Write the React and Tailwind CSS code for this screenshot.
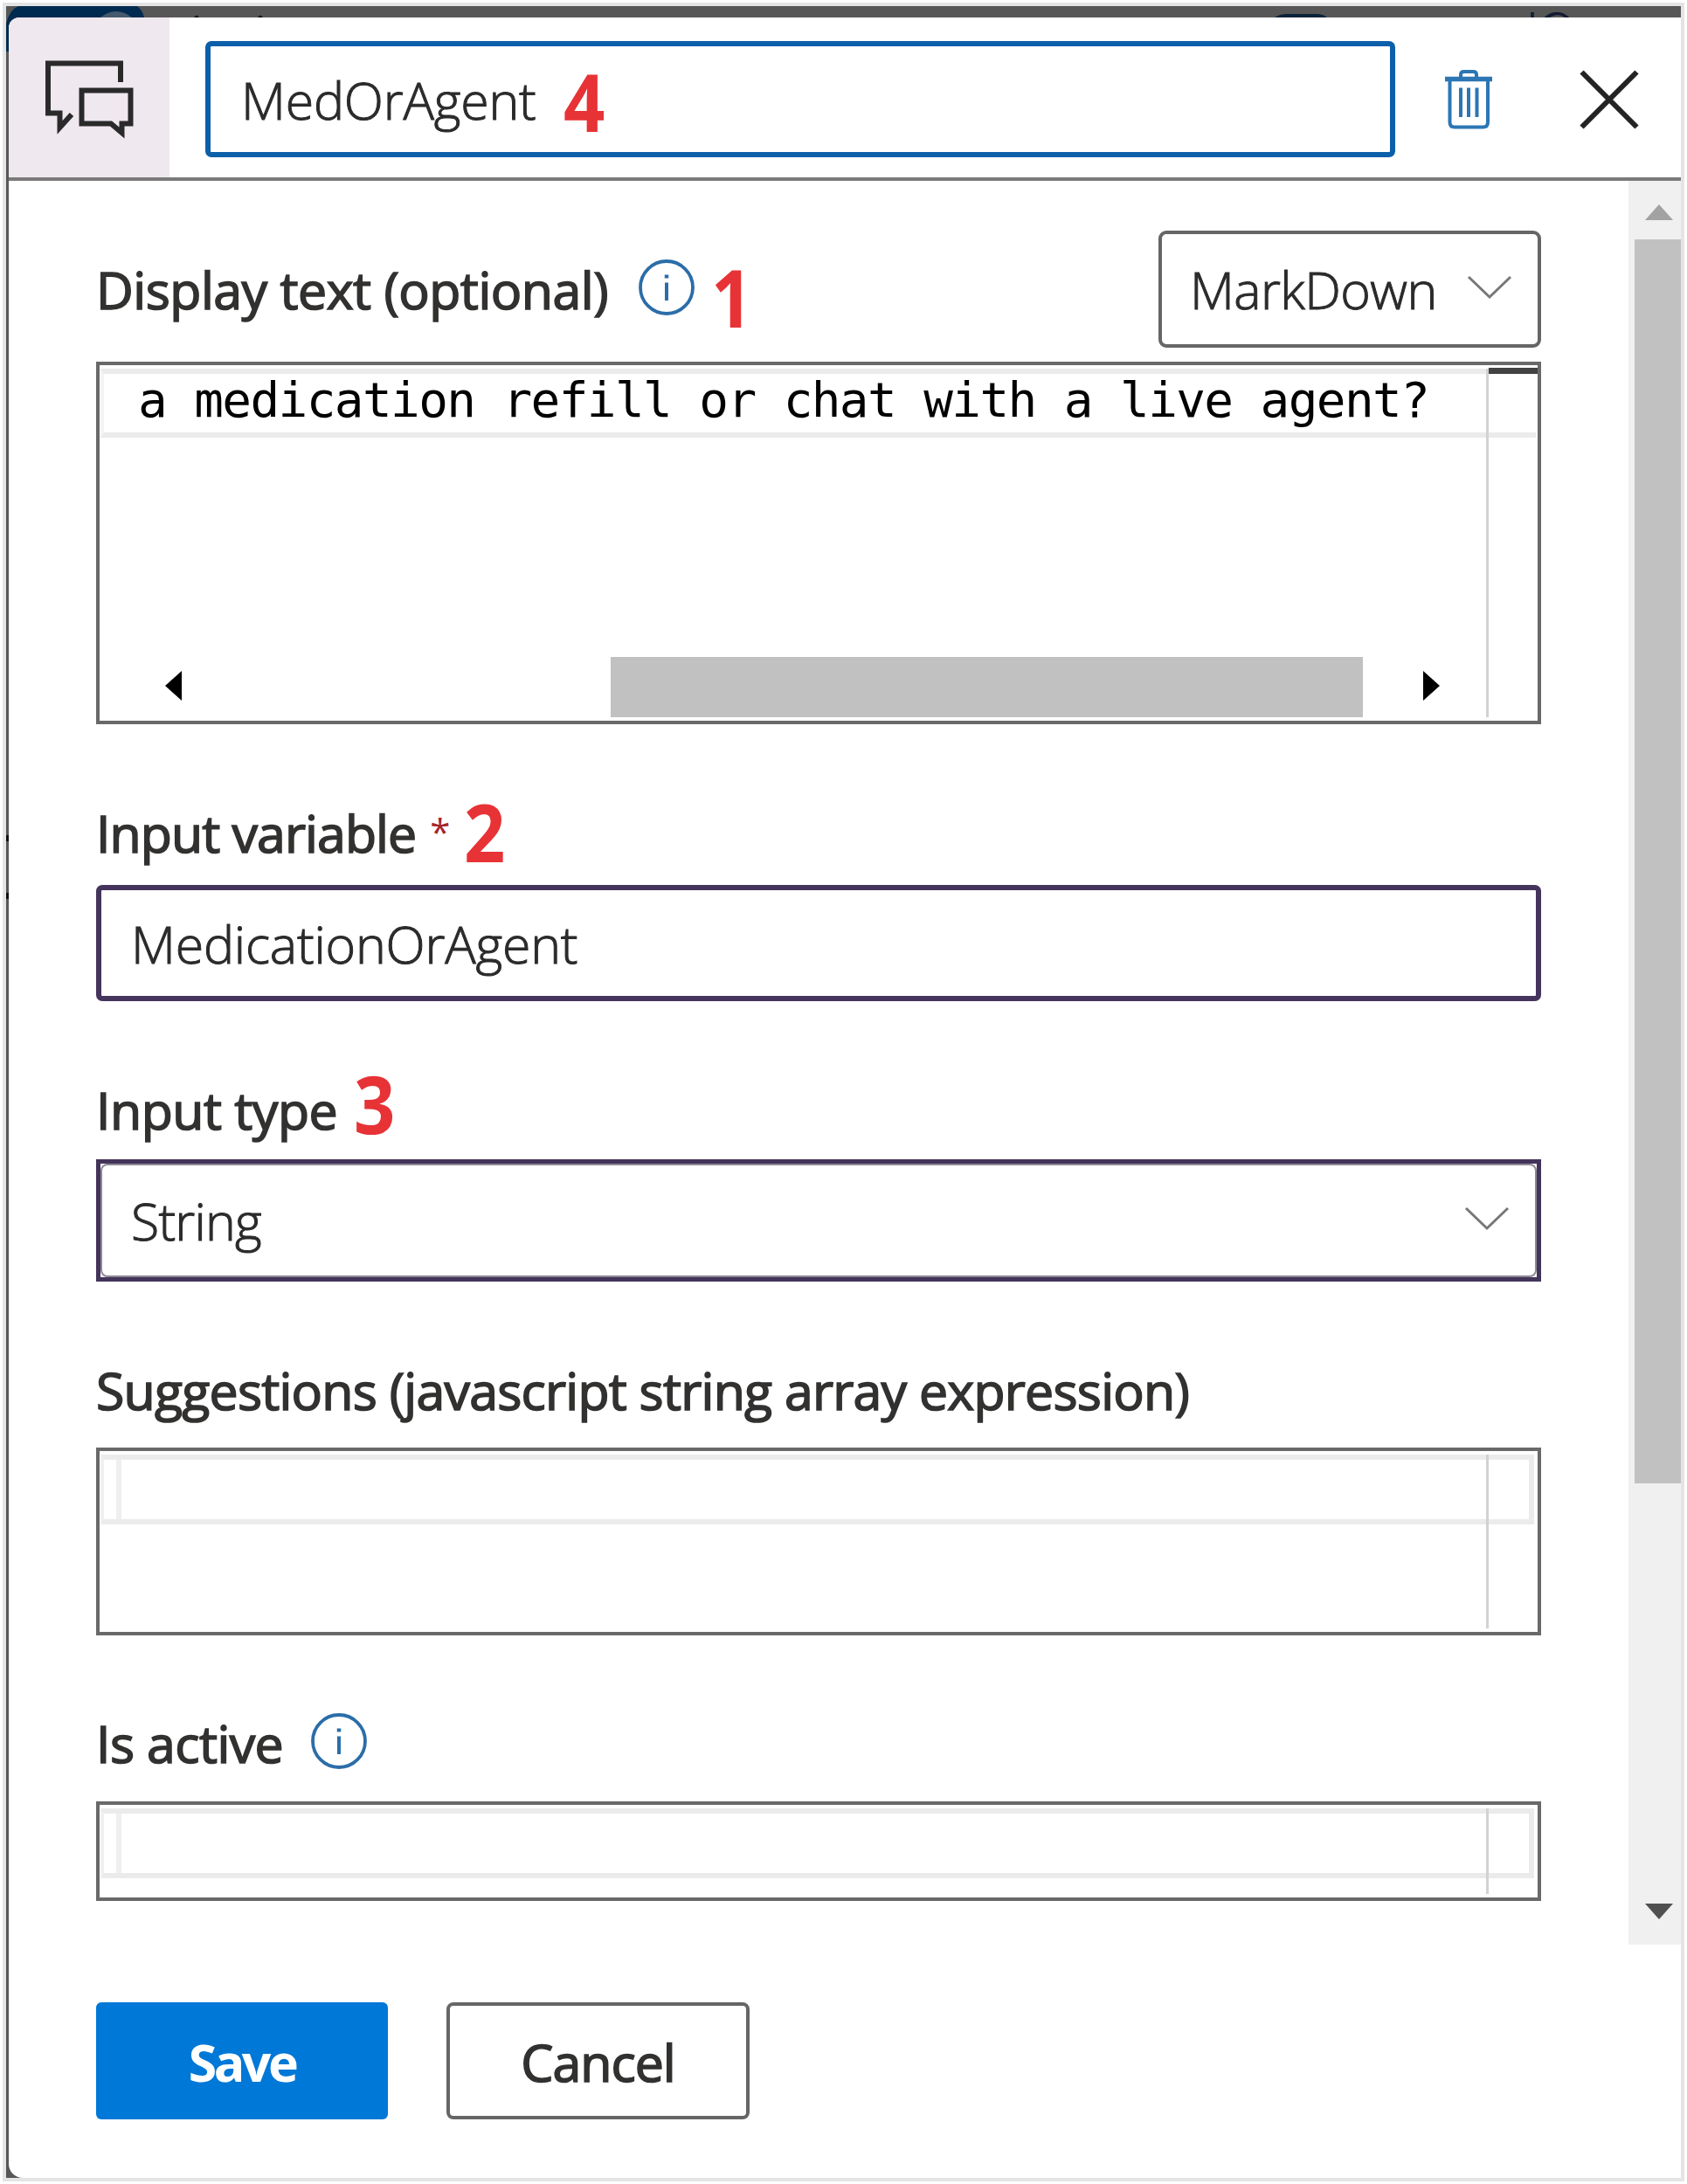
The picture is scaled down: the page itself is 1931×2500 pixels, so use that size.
const fieldText =
  "font-['Open_Sans','Segoe_UI',sans-serif] text-[59px] leading-[64px] font-light text-[#2b2b2b] [-webkit-text-stroke:1px_#2b2b2b] whitespace-nowrap";
const labelText =
  "font-['Open_Sans','Segoe_UI',sans-serif] text-[59px] leading-[64px] font-normal text-[#323130] [-webkit-text-stroke:1.6px_#323130] whitespace-nowrap";

function Step({ n, className }) {
  return (
    <span
      className={`absolute origin-left scale-x-90 font-['Open_Sans','Segoe_UI',sans-serif] text-[92px] leading-none font-bold text-[#e73336] ${className}`}
    >
      {n}
    </span>
  );
}

function ChatIcon() {
  return (
    <svg viewBox="0 0 106 92" className="h-[92px] w-[106px]" fill="none" stroke="#2b2a2b" strokeWidth="6">
      <path d="M88 25V3.5H5V60.500H18.500V77L32 62" />
      <path d="M43.500 34.500H99.500V72.500H89.500V83L77 72.500H43.500Z" />
    </svg>
  );
}

function TrashIcon() {
  return (
    <svg viewBox="0 0 56 68" className="h-[68px] w-[56px]" fill="none" stroke="#2c76b4">
      <path d="M1 10.500H55" strokeWidth="5.500" />
      <path d="M19 9V5.500Q19 2 22.500 2H33.500Q37 2 37 5.500V9" strokeWidth="4" />
      <path d="M6.500 12V60Q6.500 65.500 12 65.500H44.500Q50 65.500 50 60V12" strokeWidth="4" />
      <path d="M19 20.500V54M28 20.500V54M37.500 20.500V54" strokeWidth="4" />
    </svg>
  );
}

function CloseIcon() {
  return (
    <svg viewBox="0 0 68 68" className="size-[68px]" fill="none" stroke="#232323" strokeWidth="6">
      <path d="M2.500 2.500L65.500 65.500M65.500 2.500L2.500 65.500" />
    </svg>
  );
}

function InfoIcon() {
  return (
    <svg viewBox="0 0 66 66" className="size-[66px]" fill="none" stroke="#2b6da8">
      <circle cx="33" cy="33" r="30" strokeWidth="3.800" />
      <path d="M33 27.500V48" strokeWidth="4" />
      <path d="M33 18.500V22.500" strokeWidth="4.500" />
    </svg>
  );
}

function Chevron() {
  return (
    <svg viewBox="0 0 52 28" className="h-[28px] w-[52px]" fill="none" stroke="#777777" strokeWidth="3">
      <path d="M2 2L26 25L50 2" />
    </svg>
  );
}

function EmptyEditor({ className }) {
  return (
    <div className={`relative w-[1654px] border-4 border-[#696969] bg-white pt-1 pl-px ${className}`}>
      <div className="h-[80px] w-[1641px] border-6 border-l-4 border-[#ebebeb] border-l-[#f0f0f0] pl-[14px]">
        <div className="h-full w-[6px] bg-[#efefef]" />
      </div>
      <div className="absolute top-1 bottom-1 left-[1587px] w-[3px] bg-[#d2d2d2]" />
    </div>
  );
}

function Header() {
  return (
    <header className="flex h-[187px] shrink-0 items-center border-b-4 border-[#7a7a7a]">
      <div className="flex h-full w-[184px] items-center rounded-tl-[12px] bg-[#efe8ee] pt-[7px] pl-10">
        <ChatIcon />
      </div>
      <div className="relative mt-1 ml-[41px] flex h-[133px] w-[1362px] items-center rounded-[7px] border-6 border-[#0c5fa9] pl-[35px]">
        <span className={`${fieldText} tracking-[-0.2px]`}>MedOrAgent</span>
        <Step n="4" className="top-[17px] left-[404px]" />
      </div>
      <button className="mt-1 ml-[56px]">
        <TrashIcon />
      </button>
      <button className="mt-1 ml-[99px]">
        <CloseIcon />
      </button>
    </header>
  );
}

function DisplayEditor() {
  return (
    <div className="relative mt-4 flex h-[415px] w-[1654px] flex-col border-4 border-[#696969] pt-1 pl-px">
      <div className="flex h-[79px] w-[1643px] items-center border-y-6 border-l-4 border-[#ebebeb] border-l-[#f4f4f4] pl-[39px]">
        <span className="-mt-2 font-['DejaVu_Sans_Mono','Consolas',monospace] text-[56px] leading-[60px] tracking-[-1.6px] whitespace-pre text-black">
          a medication refill or chat with a live agent?
        </span>
      </div>
      <div className="absolute top-1 bottom-1 left-[1587px] w-[3px] bg-[#d2d2d2]" />
      <div className="absolute top-[3px] right-0 h-[7px] w-[56px] bg-[#424242]" />
      <div className="mt-auto mb-1 flex h-[69px] items-center pl-[74px]">
        <svg viewBox="0 0 20 36" className="-mt-1 h-[36px] w-[20px]">
          <path d="M19 1V35L0 18Z" fill="#000" />
        </svg>
        <div className="ml-[490px] h-full w-[861px] bg-[#c1c1c1]" />
        <svg viewBox="0 0 20 36" className="-mt-1 ml-[68px] h-[36px] w-[20px]">
          <path d="M1 1V35L20 18Z" fill="#000" />
        </svg>
      </div>
    </div>
  );
}

function Scrollbar() {
  return (
    <div className="flex h-full w-[60px] flex-col items-end bg-[#f0f0f0]">
      <svg viewBox="0 0 32 18" className="mt-[27px] mr-[9px] h-[18px] w-[32px] shrink-0">
        <path d="M16 0L32 18H0Z" fill="#a2a2a2" />
      </svg>
      <div className="mt-[22px] h-[1424px] w-[53px] bg-[#c1c1c1]" />
      <svg viewBox="0 0 32 18" className="mt-auto mr-[9px] mb-[29px] h-[18px] w-[32px] shrink-0">
        <path d="M0 0H32L16 18Z" fill="#505050" />
      </svg>
    </div>
  );
}

function Form() {
  return (
    <div className="flex w-[1754px] flex-col pt-[57px] pl-[100px]">
      <div className="relative flex h-[134px] w-[1654px] items-center">
        <span className={`${labelText} tracking-[-0.5px]`}>Display text (optional)</span>
        <div className="ml-[34px] -mt-1">
          <InfoIcon />
        </div>
        <Step n="1" className="top-[30px] left-[704px]" />
        <button className="ml-auto flex h-full w-[438px] items-center justify-between rounded-[9px] border-4 border-[#666666] pr-[29px] pl-[32px]">
          <span className={`${fieldText} tracking-[-0.6px]`}>MarkDown</span>
          <span className="-mt-[5px] flex">
            <Chevron />
          </span>
        </button>
      </div>
      <DisplayEditor />

      <div className="relative mt-[92px] flex h-[64px]">
        <span className={`${labelText} tracking-[-0.95px]`}>Input variable</span>
        <span className="-mt-px ml-4 font-['Open_Sans',sans-serif] text-[42px] leading-[64px] text-[#a4262c]">*</span>
        <Step n="2" className="-top-[15px] left-[421px]" />
      </div>
      <div className="mt-7 flex h-[133px] w-[1654px] items-center rounded-[7px] border-6 border-[#45355d] pl-[34px]">
        <span className={`${fieldText} tracking-[-0.2px]`}>MedicationOrAgent</span>
      </div>

      <div className="relative mt-[92px] flex h-[64px]">
        <span className={`${labelText} tracking-[-0.5px]`}>Input type</span>
        <Step n="3" className="-top-[21px] left-[295px]" />
      </div>
      <div className="mt-[25px] h-[140px] w-[1654px] border-5 border-[#43345a]">
        <button className="flex h-full w-full items-center justify-between rounded-[8px] border-2 border-[#8d8a96] pr-[29px] pl-[33px]">
          <span className={`${fieldText} tracking-[-0.8px]`}>String</span>
          <span className="-mt-[5px] flex">
            <Chevron />
          </span>
        </button>
      </div>

      <div className="mt-[92px] flex h-[64px]">
        <span className={`${labelText} tracking-[-0.77px]`}>Suggestions (javascript string array expression)</span>
      </div>
      <EmptyEditor className="mt-[34px] h-[215px]" />

      <div className="mt-[91px] flex h-[64px] items-center">
        <span className={`${labelText} tracking-[-0.6px]`}>Is active</span>
        <div className="ml-[31px] -mt-1">
          <InfoIcon />
        </div>
      </div>
      <EmptyEditor className="mt-[35px] h-[114px]" />
    </div>
  );
}

function Backdrop() {
  return (
    <svg viewBox="0 0 1917 1200" className="absolute top-0 left-0 h-[1200px] w-[1917px]">
      <path d="M0 52V20Q4 4 14 0H150Q156 4 158 13H14L3 24V52Z" fill="#002b50" />
      <path d="M108 13Q126 -1 144 13Z" fill="#455a6c" />
      <path d="M215 13Q218 8 221 13ZM288 13Q291 8 294 13Z" fill="#141414" />
      <path d="M1452 13Q1458 9 1466 9H1500Q1508 9 1512 13Z" fill="#0b2338" />
      <path d="M1747 7V13M1762 14Q1776 3 1788 14" fill="none" stroke="#131c33" strokeWidth="3.500" />
      <path d="M0 949h3v7h-3zM0 1015h3v7h-3z" fill="#101010" />
    </svg>
  );
}

export default function App() {
  return (
    <div className="h-[2500px] w-[1931px] overflow-hidden bg-white p-[3px]">
      <div className="relative flex h-[2494px] w-[1925px] flex-col border-4 border-[#e4e4e4] bg-[#575757] pt-[13px] pl-[3px]">
        <Backdrop />
        <main className="relative flex flex-1 flex-col rounded-tl-[12px] rounded-bl-[16px] bg-white">
          <Header />
          <div className="flex h-[2019px] shrink-0 justify-between">
            <Form />
            <Scrollbar />
          </div>
          <footer className="mt-[66px] flex h-[134px] gap-[67px] pl-[100px]">
            <button className="flex h-full w-[334px] items-center justify-center rounded-[6px] bg-[#0078d7] pt-px font-['Open_Sans','Segoe_UI',sans-serif] text-[59px] leading-[64px] font-bold tracking-[-3.5px] text-white">
              Save
            </button>
            <button className="flex h-full w-[347px] items-center justify-center rounded-[8px] border-4 border-[#666666] bg-white pt-px">
              <span className={`${labelText} tracking-[-1px]`}>Cancel</span>
            </button>
          </footer>
        </main>
      </div>
    </div>
  );
}
